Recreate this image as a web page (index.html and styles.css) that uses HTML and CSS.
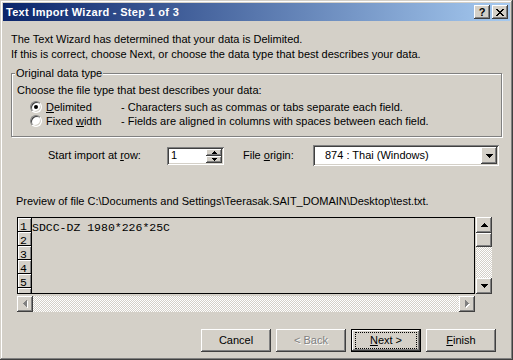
FILE: index.html
```html
<!DOCTYPE html>
<html>
<head>
<meta charset="utf-8">
<link rel="stylesheet" href="styles.css">
</head>
<body>
<div class="window">
  <div class="titlebar">
    <span class="title">Text Import Wizard - Step 1 of 3</span>
    <div class="tbtns">
      <span class="tbtn help">?</span>
      <span class="tbtn close"><svg width="8" height="7" viewBox="0 0 8 7"><path d="M0 0h2v1H0zM6 0h2v1H6zM1 1h2v1H1zM5 1h2v1H5zM2 2h4v1H2zM3 3h2v1H3zM2 4h4v1H2zM1 5h2v1H1zM5 5h2v1H5zM0 6h2v1H0zM6 6h2v1H6z" fill="#000"/></svg></span>
    </div>
  </div>
  <div class="content">
    <p class="intro">The Text Wizard has determined that your data is Delimited.<br>If this is correct, choose Next, or choose the data type that best describes your data.</p>
    <div class="group">
      <span class="legend">Original data type</span>
      <div class="choose">Choose the file type that best describes your data:</div>
      <div class="radios">
        <div class="radio-row"><span class="radio checked"></span><span class="rlabel"><u>D</u>elimited</span><span class="rdesc">- Characters such as commas or tabs separate each field.</span></div>
        <div class="radio-row"><span class="radio"></span><span class="rlabel">Fixed <u>w</u>idth</span><span class="rdesc">- Fields are aligned in columns with spaces between each field.</span></div>
      </div>
    </div>
    <div class="import-row">
      <span class="lbl-start">Start import at <u>r</u>ow:</span>
      <div class="spin">
        <span class="spin-val">1</span>
        <div class="spin-btns">
          <span class="sbtn"><svg width="5" height="3" viewBox="0 0 5 3"><path d="M2 0h1v1h1v1h1v1H0V2h1V1h1z" fill="#000"/></svg></span>
          <span class="sbtn"><svg width="5" height="3" viewBox="0 0 5 3"><path d="M0 0h5v1H4v1H3v1H2V2H1V1H0z" fill="#000"/></svg></span>
        </div>
      </div>
      <span class="lbl-origin">File <u>o</u>rigin:</span>
      <div class="combo">
        <span class="combo-val">874 : Thai (Windows)</span>
        <span class="combo-btn"><svg width="7" height="4" viewBox="0 0 7 4"><path d="M0 0h7v1H6v1H5v1H4v1H3V3H2V2H1V1H0z" fill="#000"/></svg></span>
      </div>
    </div>
    <div class="preview-label">Preview of file C:\Documents and Settings\Teerasak.SAIT_DOMAIN\Desktop\test.txt.</div>
    <div class="preview">
      <div class="box">
        <div class="rowhdr">
          <div class="hcell">1</div>
          <div class="hcell">2</div>
          <div class="hcell">3</div>
          <div class="hcell">4</div>
          <div class="hcell">5</div>
          <div class="hcell"></div>
        </div>
        <div class="data">SDCC-DZ 1980*226*25C</div>
      </div>
      <div class="vscroll">
        <span class="sb-btn"><svg width="7" height="4" viewBox="0 0 7 4"><path d="M3 0h1v1h1v1h1v1h1v1H0V3h1V2h1V1h1z" fill="#000"/></svg></span>
        <span class="sb-thumb"></span>
        <span class="sb-track"></span>
        <span class="sb-btn"><svg width="7" height="4" viewBox="0 0 7 4"><path d="M0 0h7v1H6v1H5v1H4v1H3V3H2V2H1V1H0z" fill="#000"/></svg></span>
      </div>
      <div class="hscroll">
        <span class="sb-btn"><svg width="5" height="8" viewBox="0 0 5 8"><path d="M1 3h1V2h1V1h1V0h1v7H4V6H3V5H2V4H1z" fill="#fff" transform="translate(0 1)"/><path d="M0 3h1V2h1V1h1V0h1v7H3V6H2V5H1V4H0z" fill="#808080"/></svg></span>
        <span class="sb-track"></span>
        <span class="sb-btn"><svg width="5" height="8" viewBox="0 0 5 8"><path d="M1 1h1v1h1v1h1v1h1v1H4v1H3v1H2v1H1z" fill="#fff"/><path d="M0 0h1v1h1v1h1v1h1v1H3v1H2v1H1v1H0z" fill="#808080"/></svg></span>
      </div>
    </div>
    <div class="buttons">
      <span class="btn">Cancel</span>
      <span class="btn disabled">&lt; Back</span>
      <span class="btn default"><span class="focus"><u>N</u>ext &gt;</span></span>
      <span class="btn"><u>F</u>inish</span>
    </div>
  </div>
</div>
</body>
</html>
```
FILE: styles.css
```css
* { box-sizing: border-box; margin: 0; padding: 0; }
html, body { width: 513px; height: 360px; overflow: hidden; background: #d4d0c8; }
body { font-family: "Liberation Sans", Arial, sans-serif; font-size: 11px; color: #000; }
u { text-decoration: underline; text-underline-offset: 1px; }

.window {
  width: 513px; height: 360px; padding: 3px;
  background: #d4d0c8;
  box-shadow: inset -1px -1px #404040, inset 1px 1px #d4d0c8, inset -2px -2px #808080, inset 2px 2px #fff;
  display: flex; flex-direction: column;
}

.titlebar {
  height: 18px; flex: none;
  background: linear-gradient(to right, #0a246a, #a6caf0);
  display: flex; align-items: center; justify-content: space-between;
  padding: 0 2px 0 3px;
}
.title { color: #fff; font-weight: bold; line-height: 13px; letter-spacing: 0.3px; }
.tbtns { display: flex; gap: 2px; }
.tbtn {
  width: 16px; height: 14px; background: #d4d0c8;
  box-shadow: inset -1px -1px #404040, inset 1px 1px #fff, inset -2px -2px #808080;
  display: flex; align-items: center; justify-content: center;
  font-weight: bold; font-size: 11px; line-height: 11px;
}
.tbtn.help { padding-top: 1px; }

.content { flex: 1; padding-left: 8px; display: flex; flex-direction: column; }
.intro { margin-top: 11px; line-height: 15px; }

.group {
  position: relative; margin-top: 11px; width: 491px;
  border: 1px solid #808080;
  box-shadow: inset 1px 1px #fff, 1px 1px #fff;
  padding: 9px 0 8px 5px;
}
.legend { position: absolute; top: -7px; left: 3px; padding: 0 1px; background: #d4d0c8; line-height: 13px; }
.choose { line-height: 15px; }
.radios { margin-top: 2px; }
.radio-row { display: flex; align-items: center; height: 14px; line-height: 14px; }
.radio {
  width: 12px; height: 12px; border-radius: 50%; margin: 0 4px 0 13px; flex: none;
  background: #fff; position: relative;
  border: 1px solid; border-color: #808080 #fff #fff #808080;
  box-shadow: inset 1px 1px #404040, inset -1px -1px #d4d0c8;
}
.radio.checked::after {
  content: ""; position: absolute; left: 3px; top: 3px; width: 4px; height: 4px; border-radius: 50%; background: #000;
}
.rlabel { width: 75px; flex: none; }

.import-row { display: flex; align-items: center; height: 21px; margin-top: 8px; padding-left: 37px; }
.lbl-start { width: 119px; flex: none; line-height: 13px; }
.spin {
  width: 57px; height: 18px; flex: none; background: #fff;
  box-shadow: inset 1px 1px #808080, inset -1px -1px #fff, inset 2px 2px #404040, inset -2px -2px #d4d0c8;
  display: flex; align-items: center; justify-content: space-between; padding: 2px;
}
.spin-val { padding-left: 2px; line-height: 13px; }
.spin-btns { display: flex; flex-direction: column; width: 16px; height: 14px; }
.sbtn {
  flex: 1; background: #d4d0c8; display: flex; align-items: center; justify-content: center;
  box-shadow: inset -1px -1px #404040, inset 1px 1px #fff, inset -2px -2px #808080;
}
.lbl-origin { width: 70px; margin-left: 19px; flex: none; line-height: 13px; }
.combo {
  width: 186px; height: 21px; flex: none; background: #fff;
  box-shadow: inset 1px 1px #808080, inset -1px -1px #fff, inset 2px 2px #404040, inset -2px -2px #d4d0c8;
  display: flex; align-items: center; justify-content: space-between; padding: 2px;
}
.combo-val { padding-left: 10px; line-height: 13px; }
.combo-btn {
  width: 16px; height: 17px; background: #d4d0c8; display: flex; align-items: center; justify-content: center;
  box-shadow: inset -1px -1px #404040, inset 1px 1px #fff, inset -2px -2px #808080;
}

.preview-label { margin: 28px 0 0 5px; line-height: 15px; }

.preview {
  display: grid; grid-template-columns: 458px 16px; grid-template-rows: 77px 16px;
  column-gap: 1px; row-gap: 2px; margin: 8px 0 0 6px;
}
.box { border: 1px solid #000; background: #d4d0c8; display: flex; overflow: hidden; }
.rowhdr { width: 14px; flex: none; border-right: 1px solid #000; display: flex; flex-direction: column; }
.hcell {
  height: 14px; flex: none; border-bottom: 1px solid #000;
  box-shadow: inset 1px 1px #fff, inset -1px 0 #808080;
  font-family: "Liberation Mono", "Courier New", monospace; font-size: 11.5px; line-height: 14px;
  padding: 2px 0 0 2px;
}
.data {
  font-family: "Liberation Mono", "Courier New", monospace; font-size: 11.5px; line-height: 14px;
  padding-top: 3px; white-space: pre;
}

.vscroll { display: flex; flex-direction: column; }
.hscroll { display: flex; grid-column: 1; }
.sb-btn {
  width: 16px; height: 16px; flex: none; background: #d4d0c8;
  display: flex; align-items: center; justify-content: center;
  box-shadow: inset -1px -1px #404040, inset 1px 1px #fff, inset -2px -2px #808080;
}
.sb-thumb {
  width: 16px; height: 14px; flex: none; background: #d4d0c8;
  box-shadow: inset -1px -1px #404040, inset 1px 1px #fff, inset -2px -2px #808080;
}
.sb-track {
  flex: 1;
  background: repeating-conic-gradient(#fff 0 25%, #d4d0c8 0 50%) 0 0 / 2px 2px;
}

.buttons { display: flex; justify-content: flex-end; gap: 5px; margin-top: 17px; padding-right: 14px; }
.btn {
  width: 70px; height: 23px; flex: none; background: #d4d0c8;
  display: flex; align-items: center; justify-content: center; line-height: 13px;
  box-shadow: inset -1px -1px #404040, inset 1px 1px #fff, inset -2px -2px #808080;
}
.btn.disabled { color: #808080; text-shadow: 1px 1px #fff; }
.btn.default {
  border: 1px solid #000;
  box-shadow: inset -1px -1px #404040, inset 1px 1px #fff, inset -2px -2px #808080;
}
.focus { width: 62px; height: 17px; border: 1px dotted #000; display: flex; align-items: center; justify-content: center; }
```
